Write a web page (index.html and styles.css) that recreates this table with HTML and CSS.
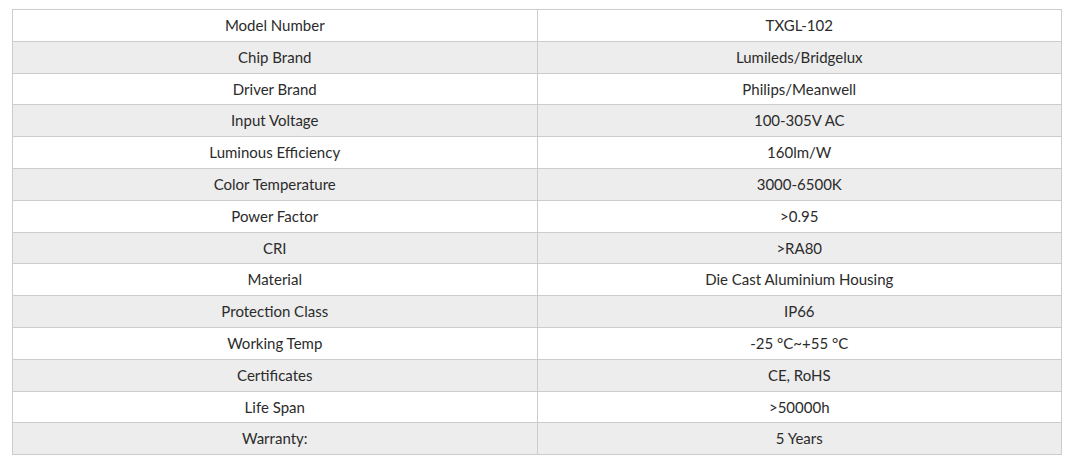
FILE: index.html
```html
<!DOCTYPE html>
<html>
<head>
<meta charset="utf-8">
<link rel="stylesheet" href="styles.css">
</head>
<body>
<table class="spec">
<tbody>
<tr><td>Model Number</td><td>TXGL-102</td></tr>
<tr><td>Chip Brand</td><td>Lumileds/Bridgelux</td></tr>
<tr><td>Driver Brand</td><td>Philips/Meanwell</td></tr>
<tr><td>Input Voltage</td><td>100-305V AC</td></tr>
<tr><td>Luminous Efficiency</td><td>160lm/W</td></tr>
<tr><td>Color Temperature</td><td>3000-6500K</td></tr>
<tr><td>Power Factor</td><td>&gt;0.95</td></tr>
<tr><td>CRI</td><td>&gt;RA80</td></tr>
<tr><td>Material</td><td>Die Cast Aluminium Housing</td></tr>
<tr><td>Protection Class</td><td>IP66</td></tr>
<tr><td>Working Temp</td><td>-25 °C~+55 °C</td></tr>
<tr><td>Certificates</td><td>CE, RoHS</td></tr>
<tr><td>Life Span</td><td>&gt;50000h</td></tr>
<tr><td>Warranty:</td><td>5 Years</td></tr>
</tbody>
</table>
</body>
</html>
```
FILE: styles.css
```css
html, body {
  margin: 0;
  background: #fff;
}
body {
  padding: 9px 10px 0 12px;
  font-family: Lato, "Liberation Sans", sans-serif;
  font-size: 15px;
  color: #2b2b2b;
}
.spec {
  width: 1050px;
  border-collapse: collapse;
  table-layout: fixed;
}
.spec td {
  border: 1px solid #cccccc;
  text-align: center;
  padding: 5px 4px;
  line-height: 20.8px;
  height: 20.8px;
}
.spec tr:nth-child(even) td {
  background: #ededed;
}
```
